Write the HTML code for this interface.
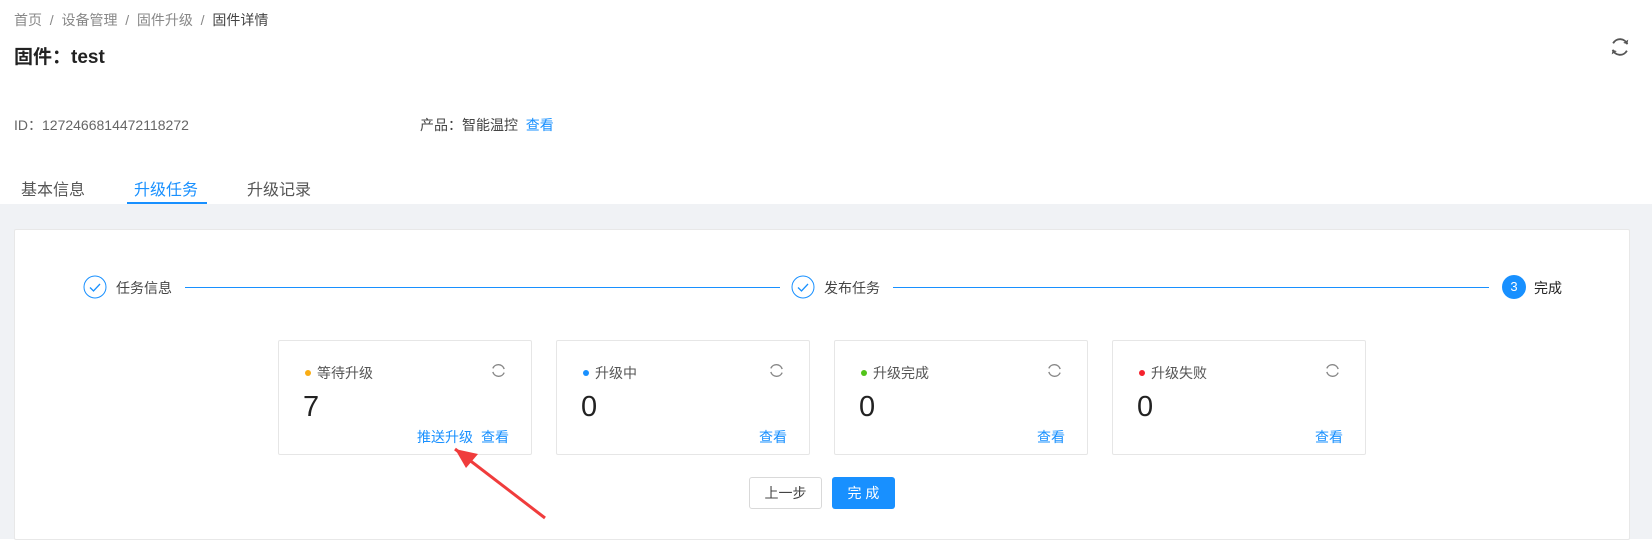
<!DOCTYPE html>
<html><head><meta charset="utf-8"><style>
*{margin:0;padding:0;box-sizing:border-box}
body{width:1652px;height:539px;overflow:hidden;background:#fff;font-family:"Liberation Sans","Noto Sans CJK SC",sans-serif;color:#333;position:relative}
.a{position:absolute;white-space:nowrap}
.gray{position:absolute;left:0;top:204px;width:1652px;height:335px;background:#f0f2f5}
.card{position:absolute;left:14px;top:229px;width:1616px;height:311px;background:#fff;border:1px solid #e8e8e8;border-radius:2px}
.sc{position:absolute;top:340px;width:254px;height:115px;border:1px solid #e6e6e6;border-radius:2px;background:#fff}
.dot{position:absolute;left:26px;top:29px;width:6px;height:6px;border-radius:50%}
.lab{position:absolute;left:38px;top:22px;font-size:14px;color:#555}
.num{position:absolute;left:24px;top:50px;font-size:29px;color:#222}
.lnk{position:absolute;top:86px;font-size:14px;color:#1890ff}
.ref{position:absolute;right:24px;top:21px}
.blue{color:#1890ff}
</style></head><body>
<div class="a" style="left:14px;top:10px;font-size:14px;color:#888">首页 &nbsp;/&nbsp; 设备管理 &nbsp;/&nbsp; 固件升级 &nbsp;/&nbsp; <span style="color:#444">固件详情</span></div>
<div class="a" style="left:14px;top:42px;font-size:19px;font-weight:bold;color:#222">固件：test</div>
<svg class="a" style="left:1609px;top:36px" width="22" height="22" viewBox="0 0 24 24" fill="none" stroke="#555" stroke-width="2"><path d="M20 9A8.5 8.5 0 0 0 4.5 8"/><path d="M4 15a8.5 8.5 0 0 0 15.5 1"/><path d="M21 4l-1 5-4.5-1.5z" fill="#555" stroke="none"/><path d="M3 20l1-5 4.5 1.5z" fill="#555" stroke="none"/></svg>
<div class="a" style="left:14px;top:115px;font-size:14px;color:#666">ID：1272466814472118272</div>
<div class="a" style="left:420px;top:115px;font-size:14px;color:#444">产品：智能温控 &nbsp;<span class="blue">查看</span></div>
<div class="a" style="left:21px;top:176px;font-size:16px;color:#555">基本信息</div>
<div class="a" style="left:134px;top:176px;font-size:16px;color:#1890ff">升级任务</div>
<div class="a" style="left:247px;top:176px;font-size:16px;color:#555">升级记录</div>
<div class="a" style="left:127px;top:202px;width:80px;height:2px;background:#1890ff"></div>
<div class="gray"></div>
<div class="card"></div>
<svg class="a" style="left:83px;top:275px" width="24" height="24"><circle cx="12" cy="12" r="11" fill="#fff" stroke="#1890ff"/><path d="M7 12.5l3.5 3.5 6.5-7" fill="none" stroke="#1890ff" stroke-width="1.3"/></svg>
<div class="a" style="left:116px;top:278px;font-size:14px;color:#444">任务信息</div>
<div class="a" style="left:185px;top:287px;width:595px;height:1px;background:#1890ff"></div>
<svg class="a" style="left:791px;top:275px" width="24" height="24"><circle cx="12" cy="12" r="11" fill="#fff" stroke="#1890ff"/><path d="M7 12.5l3.5 3.5 6.5-7" fill="none" stroke="#1890ff" stroke-width="1.3"/></svg>
<div class="a" style="left:824px;top:278px;font-size:14px;color:#444">发布任务</div>
<div class="a" style="left:893px;top:287px;width:596px;height:1px;background:#1890ff"></div>
<div class="a" style="left:1502px;top:275px;width:24px;height:24px;border-radius:50%;background:#1890ff;color:#fff;font-size:13px;text-align:center;line-height:24px">3</div>
<div class="a" style="left:1534px;top:278px;font-size:14px;color:#222">完成</div>
<div class="sc" style="left:278px"><div class="dot" style="background:#faad14"></div><div class="lab">等待升级</div><div class="num">7</div><div class="lnk" style="left:138px">推送升级</div><div class="lnk" style="left:202px">查看</div><svg class="ref" width="17" height="17" viewBox="0 0 24 24" fill="none" stroke="#888" stroke-width="2"><path d="M20 10A8.5 8.5 0 0 0 4 9M4 14a8.5 8.5 0 0 0 16 1"/></svg></div>
<div class="sc" style="left:556px"><div class="dot" style="background:#1890ff"></div><div class="lab">升级中</div><div class="num">0</div><div class="lnk" style="left:202px">查看</div><svg class="ref" width="17" height="17" viewBox="0 0 24 24" fill="none" stroke="#888" stroke-width="2"><path d="M20 10A8.5 8.5 0 0 0 4 9M4 14a8.5 8.5 0 0 0 16 1"/></svg></div>
<div class="sc" style="left:834px"><div class="dot" style="background:#52c41a"></div><div class="lab">升级完成</div><div class="num">0</div><div class="lnk" style="left:202px">查看</div><svg class="ref" width="17" height="17" viewBox="0 0 24 24" fill="none" stroke="#888" stroke-width="2"><path d="M20 10A8.5 8.5 0 0 0 4 9M4 14a8.5 8.5 0 0 0 16 1"/></svg></div>
<div class="sc" style="left:1112px"><div class="dot" style="background:#f5222d"></div><div class="lab">升级失败</div><div class="num">0</div><div class="lnk" style="left:202px">查看</div><svg class="ref" width="17" height="17" viewBox="0 0 24 24" fill="none" stroke="#888" stroke-width="2"><path d="M20 10A8.5 8.5 0 0 0 4 9M4 14a8.5 8.5 0 0 0 16 1"/></svg></div>
<div class="a" style="left:749px;top:477px;width:73px;height:32px;border:1px solid #d9d9d9;border-radius:3px;background:#fff;font-size:14px;color:#444;text-align:center;line-height:30px">上一步</div>
<div class="a" style="left:832px;top:477px;width:63px;height:32px;border-radius:3px;background:#1890ff;font-size:14px;color:#fff;text-align:center;line-height:32px">完 成</div>
<svg class="a" style="left:438px;top:437px" width="120" height="99"><path d="M17 12L107 81" stroke="#f03c3c" stroke-width="3"/><path d="M17 12L40 17L28 31Z" fill="#f03c3c"/></svg>
</body></html>
